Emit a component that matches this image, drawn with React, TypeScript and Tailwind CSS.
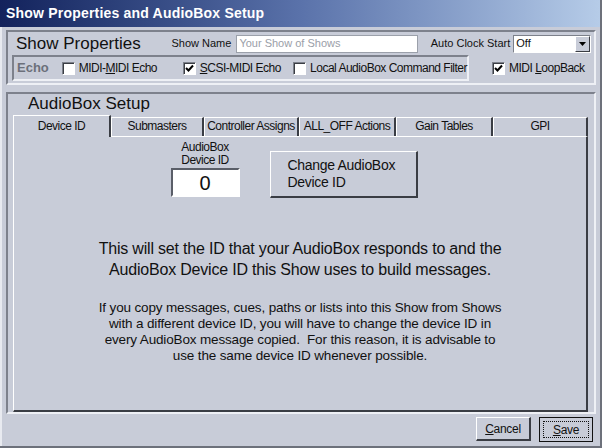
import React from 'react';

const ui = { fontFamily: '"Liberation Sans", Arial, sans-serif' };

function Check({ checked }: { checked?: boolean }) {
  return (
    <span className="inline-flex h-[13px] w-[13px] shrink-0 items-center justify-center border border-t-[#7c808a] border-l-[#7c808a] border-r-white border-b-white bg-white shadow-[inset_1px_1px_0_#3a3d44]">
      {checked && (
        <svg width="9" height="9" viewBox="0 0 9 9">
          <path d="M1 4 L3.5 6.5 L8 1.5" stroke="#000" strokeWidth="2" fill="none" />
        </svg>
      )}
    </span>
  );
}

function CheckItem({ checked, children }: { checked?: boolean; children: React.ReactNode }) {
  return (
    <div className="flex items-center gap-[4px] whitespace-nowrap text-[12px] tracking-[-0.5px] text-[#111]">
      <Check checked={checked} />
      <span>{children}</span>
    </div>
  );
}

const tabs = ['Device ID', 'Submasters', 'Controller Assigns', 'ALL_OFF Actions', 'Gain Tables', 'GPI'];
const tabW = [98, 93, 95, 97, 97, 95];

export default function App() {
  return (
    <div
      className="flex h-[448px] w-[602px] flex-col overflow-hidden border-r-2 border-b-2 border-r-[#6d717b] border-b-[#6d717b] bg-[#c8ccd8]"
      style={ui}
    >
      {/* title bar */}
      <div className="flex h-[27px] items-center bg-gradient-to-r from-[#13225c] via-[#5a72aa] to-[#b6cce8] pl-[6px]">
        <span className="whitespace-nowrap text-[14px] font-bold tracking-[0.2px] text-white">
          Show Properties and AudioBox Setup
        </span>
      </div>

      <div className="flex flex-1 flex-col border-l-2 border-l-[#e8eaf0] px-[4px]">
        {/* show properties group */}
        <div className="mt-[3px] flex h-[55px] flex-col border-2 border-t-[#7d818c] border-l-[#7d818c] border-r-[#eef0f5] border-b-[#eef0f5] pl-[4px] pr-[3px]">
          <div className="flex h-[23px] items-center whitespace-nowrap">
            <span className="ml-[4px] w-[156px] text-[17px] text-[#111]">Show Properties</span>
            <span className="text-[11px] text-[#111]">Show Name</span>
            <div className="ml-[5px] flex h-[18px] w-[182px] items-center border border-[#9ba0aa] bg-white px-[2px] text-[11px] text-[#9a9ea8]">
              Your Show of Shows
            </div>
            <span className="ml-[13px] text-[11px] text-[#111]">Auto Clock Start</span>
            <div className="ml-[3px] flex h-[18px] w-[78px] items-center justify-between border border-t-[#7c808a] border-l-[#7c808a] border-r-white border-b-white bg-white pl-[2px]">
              <span className="text-[11px] text-[#111]">Off</span>
              <span className="flex h-[16px] w-[15px] items-center justify-center border border-t-white border-l-white border-r-[#3a3d44] border-b-[#3a3d44] bg-[#c8ccd8]">
                <svg width="7" height="4" viewBox="0 0 7 4">
                  <path d="M0 0 H7 L3.5 4 Z" fill="#000" />
                </svg>
              </span>
            </div>
          </div>
          <div className="flex items-center">
            <div className="flex h-[26px] w-[457px] items-center border-2 border-t-[#7d818c] border-l-[#7d818c] border-r-[#eef0f5] border-b-[#eef0f5] pl-[3px]">
              <span className="w-[45px] text-[13px] font-bold text-[#6c707a]">Echo</span>
              <div className="w-[122px]">
                <CheckItem>
                  MIDI-<u>M</u>IDI Echo
                </CheckItem>
              </div>
              <div className="w-[111px]">
                <CheckItem checked>
                  <u>S</u>CSI-MIDI Echo
                </CheckItem>
              </div>
              <CheckItem>Local AudioBox Command Filter</CheckItem>
            </div>
            <div className="ml-[23px]">
              <CheckItem checked>
                MIDI <u>L</u>oopBack
              </CheckItem>
            </div>
          </div>
        </div>

        {/* audiobox setup group */}
        <div className="mt-[7px] flex h-[322px] flex-col border-2 border-t-[#7d818c] border-l-[#7d818c] border-r-[#eef0f5] border-b-[#eef0f5] px-[5px]">
          <div className="h-[20px] pl-[15px] text-[17px] leading-[20px] text-[#111]">AudioBox Setup</div>
          <div className="flex h-[22px] items-end">
            {tabs.map((t, i) => (
              <div
                key={t}
                style={{ width: tabW[i] }}
                className={
                  i === 0
                    ? 'relative z-10 -mb-[1px] flex h-[22px] items-start justify-center whitespace-nowrap border-t border-l border-r-2 border-t-white border-l-white border-r-[#3a3d44] bg-[#c8ccd8] pt-[3px] text-[12px] leading-[14px] tracking-[-0.5px] text-[#111]'
                    : 'flex h-[19px] items-start justify-center whitespace-nowrap border-t border-l border-r-2 border-t-white border-l-white border-r-[#3a3d44] pt-[1px] text-[12px] leading-[15px] tracking-[-0.5px] text-[#111]'
                }
              >
                {t}
              </div>
            ))}
          </div>
          <div className="mr-[1px] flex flex-1 flex-col items-center border border-r-2 border-b-2 border-t-white border-l-white border-r-[#3a3d44] border-b-[#3a3d44]">
            <div className="mr-[12px] mt-[4px] flex items-start">
              <div className="flex flex-col items-center">
                <div className="whitespace-nowrap text-center text-[12px] leading-[13px] tracking-[-0.5px] text-[#111]">
                  AudioBox
                  <br />
                  Device ID
                </div>
                <div className="mt-[1px] flex h-[29px] w-[69px] items-center justify-center border-2 border-t-[#5a5e68] border-l-[#5a5e68] border-r-white border-b-white bg-white text-[20px] text-[#111]">
                  0
                </div>
              </div>
              <div className="ml-[30px] mt-[10px] flex h-[47px] w-[148px] flex-col justify-center whitespace-nowrap border border-r-2 border-b-2 border-t-white border-l-white border-r-[#3a3d44] border-b-[#3a3d44] pl-[17px] text-[14px] leading-[17px] tracking-[-0.3px] text-[#111]">
                <span>Change AudioBox</span>
                <span>Device ID</span>
              </div>
            </div>
            <p className="mt-[40px] whitespace-nowrap text-center text-[16px] leading-[21px] tracking-[-0.2px] text-[#111]">
              This will set the ID that your AudioBox responds to and the
              <br />
              AudioBox Device ID this Show uses to build messages.
            </p>
            <p className="mt-[20px] whitespace-nowrap text-center text-[13.5px] leading-[16px] tracking-[-0.15px] text-[#111]">
              If you copy messages, cues, paths or lists into this Show from Shows
              <br />
              with a different device ID, you will have to change the device ID in
              <br />
              every AudioBox message copied.&nbsp; For this reason, it is advisable to
              <br />
              use the same device ID whenever possible.
            </p>
          </div>
        </div>

        {/* footer buttons */}
        <div className="mt-[3px] flex justify-end gap-[8px] pr-[3px]">
          <div className="flex h-[24px] w-[55px] items-center justify-center border border-r-2 border-b-2 border-t-white border-l-white border-r-[#3a3d44] border-b-[#3a3d44] text-[12px] tracking-[-0.3px] text-[#111]">
            <span>
              <u>C</u>ancel
            </span>
          </div>
          <div className="flex h-[25px] w-[54px] items-center justify-center border border-[#111] p-[3px]">
            <div className="flex h-full w-full items-center justify-center border border-dotted border-[#111] text-[12px] tracking-[-0.3px] text-[#111]">
              <span>
                <u>S</u>ave
              </span>
            </div>
          </div>
        </div>
      </div>
    </div>
  );
}
